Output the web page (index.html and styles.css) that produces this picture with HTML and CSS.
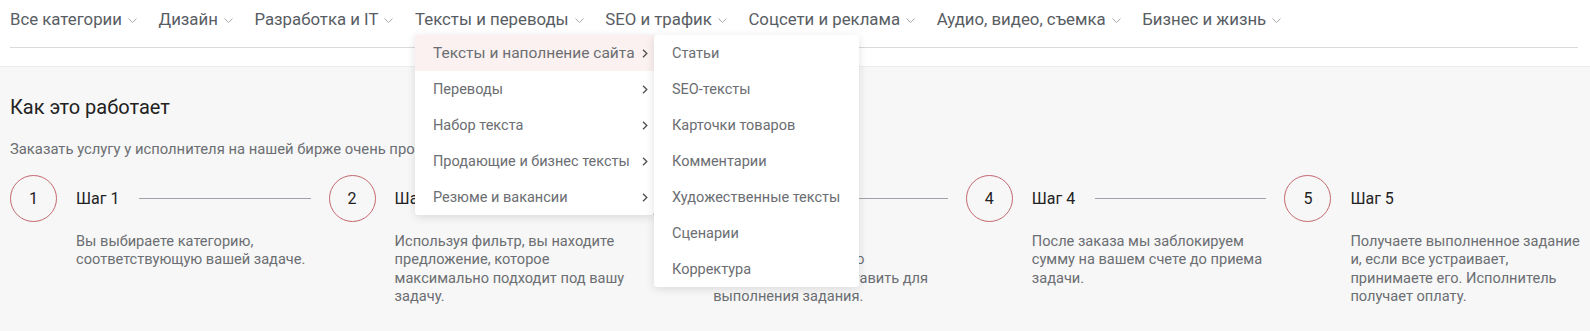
FILE: index.html
```html
<!DOCTYPE html>
<html lang="ru">
<head>
<meta charset="utf-8">
<link rel="stylesheet" href="styles.css">
</head>
<body>
<header class="header">
  <nav class="nav">
    <a class="nav-item">Все категории<svg class="caret" viewBox="0 0 9 5"><path d="M0.5 0.5L4.5 4.5L8.5 0.5"/></svg></a>
    <a class="nav-item">Дизайн<svg class="caret" viewBox="0 0 9 5"><path d="M0.5 0.5L4.5 4.5L8.5 0.5"/></svg></a>
    <a class="nav-item">Разработка и IT<svg class="caret" viewBox="0 0 9 5"><path d="M0.5 0.5L4.5 4.5L8.5 0.5"/></svg></a>
    <a class="nav-item">Тексты и переводы<svg class="caret" viewBox="0 0 9 5"><path d="M0.5 0.5L4.5 4.5L8.5 0.5"/></svg></a>
    <a class="nav-item">SEO и трафик<svg class="caret" viewBox="0 0 9 5"><path d="M0.5 0.5L4.5 4.5L8.5 0.5"/></svg></a>
    <a class="nav-item">Соцсети и реклама<svg class="caret" viewBox="0 0 9 5"><path d="M0.5 0.5L4.5 4.5L8.5 0.5"/></svg></a>
    <a class="nav-item">Аудио, видео, съемка<svg class="caret" viewBox="0 0 9 5"><path d="M0.5 0.5L4.5 4.5L8.5 0.5"/></svg></a>
    <a class="nav-item">Бизнес и жизнь<svg class="caret" viewBox="0 0 9 5"><path d="M0.5 0.5L4.5 4.5L8.5 0.5"/></svg></a>
  </nav>
  <div class="dropdown">
    <ul class="menu">
      <li class="menu-item active">Тексты и наполнение сайта<svg class="arrow" viewBox="0 0 6 9"><path d="M1 0.8L4.8 4.5L1 8.2"/></svg></li>
      <li class="menu-item">Переводы<svg class="arrow" viewBox="0 0 6 9"><path d="M1 0.8L4.8 4.5L1 8.2"/></svg></li>
      <li class="menu-item">Набор текста<svg class="arrow" viewBox="0 0 6 9"><path d="M1 0.8L4.8 4.5L1 8.2"/></svg></li>
      <li class="menu-item">Продающие и бизнес тексты<svg class="arrow" viewBox="0 0 6 9"><path d="M1 0.8L4.8 4.5L1 8.2"/></svg></li>
      <li class="menu-item">Резюме и вакансии<svg class="arrow" viewBox="0 0 6 9"><path d="M1 0.8L4.8 4.5L1 8.2"/></svg></li>
    </ul>
    <ul class="submenu">
      <li class="sub-item">Статьи</li>
      <li class="sub-item">SEO-тексты</li>
      <li class="sub-item">Карточки товаров</li>
      <li class="sub-item">Комментарии</li>
      <li class="sub-item">Художественные тексты</li>
      <li class="sub-item">Сценарии</li>
      <li class="sub-item">Корректура</li>
    </ul>
  </div>
</header>
<section class="how">
  <h2 class="how-title">Как это работает</h2>
  <p class="how-lead">Заказать услугу у исполнителя на нашей бирже очень просто.</p>
  <div class="steps">
    <div class="step">
      <div class="circle">1</div>
      <div class="step-body">
        <div class="step-head"><span class="step-title">Шаг 1</span><span class="step-line"></span></div>
        <p class="step-text">Вы выбираете категорию, соответствующую вашей задаче.</p>
      </div>
    </div>
    <div class="step">
      <div class="circle">2</div>
      <div class="step-body">
        <div class="step-head"><span class="step-title">Шаг 2</span><span class="step-line"></span></div>
        <p class="step-text">Используя фильтр, вы находите предложение, которое максимально подходит под вашу задачу.</p>
      </div>
    </div>
    <div class="step">
      <div class="circle">3</div>
      <div class="step-body">
        <div class="step-head"><span class="step-title">Шаг 3</span><span class="step-line"></span></div>
        <p class="step-text">Оформляете заказ<br>и новую информацию<br>которую надо представить для<br>выполнения задания.</p>
      </div>
    </div>
    <div class="step">
      <div class="circle">4</div>
      <div class="step-body">
        <div class="step-head"><span class="step-title">Шаг 4</span><span class="step-line"></span></div>
        <p class="step-text">После заказа мы заблокируем сумму на вашем счете до приема задачи.</p>
      </div>
    </div>
    <div class="step last">
      <div class="circle">5</div>
      <div class="step-body">
        <div class="step-head"><span class="step-title">Шаг 5</span></div>
        <p class="step-text">Получаете выполненное задание и, если все устраивает, принимаете его. Исполнитель получает оплату.</p>
      </div>
    </div>
  </div>
</section>
</body>
</html>
```
FILE: styles.css
```css
* { box-sizing: border-box; }
html, body { margin: 0; padding: 0; }
body {
  font-family: Roboto, "Liberation Sans", Arial, sans-serif;
  background: #fff;
  color: #222;
  width: 1590px;
  height: 331px;
  overflow: hidden;
}
.header {
  position: relative;
  margin: 0 12px 0 10px;
  height: 66px;
  z-index: 5;
}
.nav {
  display: flex;
  align-items: center;
  gap: 21.6px;
  padding: 7px 0 16px 0;
  border-bottom: 1px solid #dadada;
}
.nav-item {
  display: inline-flex;
  align-items: center;
  font-size: 16.8px;
  line-height: 24px;
  color: #585d63;
  white-space: nowrap;
}
.caret {
  width: 9px;
  height: 5px;
  margin-left: 6px;
  margin-top: 2px;
  fill: none;
  stroke: #a9a9a9;
  stroke-width: 1;
}
.dropdown {
  position: absolute;
  left: 405px;
  top: 35px;
  display: flex;
  align-items: flex-start;
}
.menu, .submenu {
  list-style: none;
  margin: 0;
  padding: 0;
  background: #fff;
  border-radius: 3px;
  box-shadow: 0 2px 10px rgba(0, 0, 0, 0.12);
}
.menu {
  width: 239px;
  position: relative;
  z-index: 1;
}
.submenu {
  width: 205px;
  position: relative;
  z-index: 2;
}
.menu-item, .sub-item {
  height: 36px;
  display: flex;
  align-items: center;
  color: #6b6e72;
  white-space: nowrap;
  font-size: 14.5px;
}
.menu-item {
  justify-content: space-between;
  padding: 0 6px 0 18px;
}
.menu-item.active {
  background: #fbf1f1;
  font-size: 15.5px;
}
.sub-item {
  padding: 0 18px;
}
.arrow {
  flex: none;
  width: 6px;
  height: 9px;
  fill: none;
  stroke: #555;
  stroke-width: 1.4;
}
.how {
  background: #f7f7f7;
  border-top: 1px solid #e8eef2;
  padding: 28px 0 40px 10px;
  height: 265px;
}
.how-title {
  margin: 0;
  font-size: 20px;
  line-height: 24px;
  font-weight: 400;
  color: #222;
}
.how-lead {
  margin: 20px 0 0;
  font-size: 14.8px;
  line-height: 20px;
  color: #6b6e72;
}
.steps {
  display: grid;
  grid-template-columns: repeat(4, 318.6px) 1fr;
  margin-top: 16px;
}
.step {
  display: flex;
  align-items: flex-start;
}
.circle {
  flex: none;
  width: 47px;
  height: 47px;
  border: 1px solid #c46870;
  border-radius: 50%;
  display: flex;
  align-items: center;
  justify-content: center;
  font-size: 16px;
  color: #222;
}
.step-body {
  flex: 1;
  margin-left: 19px;
}
.step-head {
  height: 47px;
  display: flex;
  align-items: center;
}
.step-title {
  font-size: 16px;
  color: #222;
  white-space: nowrap;
}
.step-line {
  flex: 1;
  height: 1px;
  background: #9ea3aa;
  margin: 0 18px 0 20px;
}
.step-text {
  margin: 10px 0 0;
  max-width: 242px;
  font-size: 14.6px;
  line-height: 18.3px;
  color: #6b6e72;
}
```
